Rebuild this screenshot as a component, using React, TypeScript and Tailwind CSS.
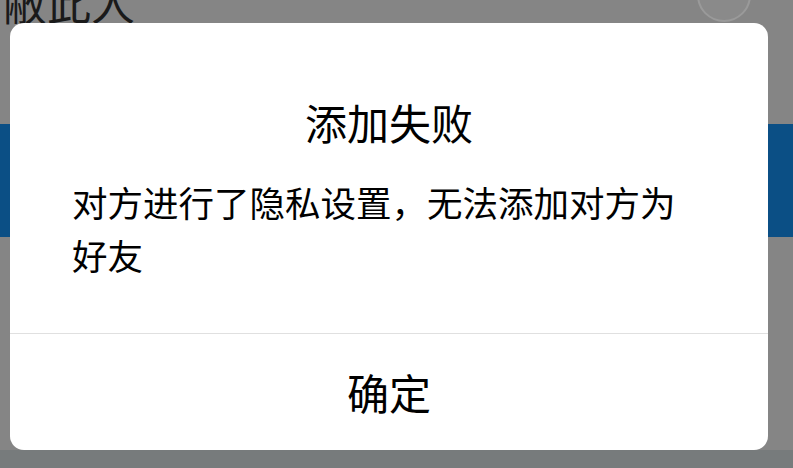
export default function App() {
  return (
    <div
      className="relative w-[793px] h-[468px] overflow-hidden bg-[#858585]"
      style={{ fontFamily: '"Noto Sans CJK SC", "Noto Sans", sans-serif' }}
    >
      {/* dimmed page behind the dialog */}
      <div className="flex flex-col">
        <div className="h-[124px] flex items-start justify-between">
          <span className="text-[44px] leading-none text-[#1a1a1a] pl-[3px] -mt-[20px]">敝此人</span>
          <div className="w-[54px] h-[54px] rounded-full border-2 border-[#9a9a9a] bg-[#8a8a8a] mr-[42px] -mt-[32px]" />
        </div>
        <div className="h-[113px] bg-[#0b4f85]" />
        <div className="h-[213px] bg-[#858585]" />
        <div className="h-[18px] bg-[#777b7c]" />
      </div>

      {/* dialog */}
      <div className="absolute left-[10px] top-[23px] w-[758px] h-[427px] rounded-[14px] bg-white flex flex-col">
        <div className="h-[310px] flex flex-col">
          <div className="pt-[75px] text-center text-[42px] leading-[48px] text-black">添加失败</div>
          <div className="mt-[29px] pl-[62px] pr-[76px] text-[35.5px] leading-[53px] text-black">
            对方进行了隐私设置，无法添加对方为好友
          </div>
        </div>
        <div className="flex-1 border-t border-[#e0e0e0] flex items-center justify-center">
          <span className="text-[42px] leading-none text-black">确定</span>
        </div>
      </div>
    </div>
  );
}
